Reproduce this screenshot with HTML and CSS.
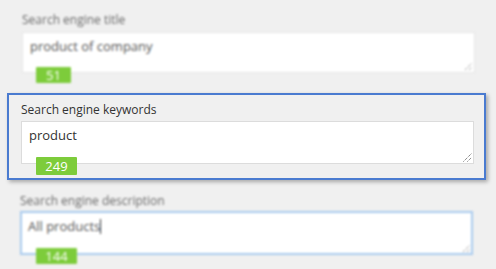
FILE: index.html
```html
<!DOCTYPE html>
<html>
<head>
<meta charset="utf-8">
<link rel="stylesheet" href="styles.css">
</head>
<body>
<div class="page">
  <div class="group blurred top">
    <div class="label">Search engine title</div>
    <div class="field">
      <div class="box">product of company</div>
      <svg class="grip" width="9" height="9" viewBox="0 0 9 9"><path d="M1 8 L8 1 M5 8 L8 5" stroke="#777" stroke-width="1" stroke-dasharray="1 1"/></svg>
      <span class="badge narrow">51</span>
    </div>
  </div>
  <div class="group highlight">
    <div class="label">Search engine keywords</div>
    <div class="field">
      <div class="box">product</div>
      <svg class="grip" width="9" height="9" viewBox="0 0 9 9"><path d="M0.5 8.5 L8.5 0.5 M4.5 8.5 L8.5 4.5" stroke="#555" stroke-width="1" stroke-dasharray="1 1"/></svg>
      <span class="badge">249</span>
    </div>
  </div>
  <div class="group blurred bottom">
    <div class="label">Search engine description</div>
    <div class="field">
      <div class="box focus">All products<span class="caret"></span></div>
      <svg class="grip" width="9" height="9" viewBox="0 0 9 9"><path d="M1 8 L8 1 M5 8 L8 5" stroke="#777" stroke-width="1" stroke-dasharray="1 1"/></svg>
      <span class="badge">144</span>
    </div>
  </div>
</div>
</body>
</html>
```
FILE: styles.css
```css
html, body {
  margin: 0;
  padding: 0;
}
body {
  background: #f0f0f0;
  font-family: "Open Sans", "Noto Sans", sans-serif;
  width: 496px;
  height: 269px;
  overflow: hidden;
}
.page {
  display: flex;
  flex-direction: column;
}
.group {
  display: flex;
  flex-direction: column;
}
.blurred {
  filter: blur(0.8px);
}
.blurred .label {
  color: #6a6a6a;
}
.blurred .box {
  color: #555;
}
.top {
  padding: 11px 0 0 22px;
}
.highlight {
  margin: 20px 0 0 7px;
  border: 2px solid #4a7bd0;
  box-shadow: 2px 2px 4px rgba(0, 0, 0, 0.3);
  padding: 5px 0 0 12px;
  box-sizing: border-box;
  height: 87px;
  width: 479px;
}
.bottom {
  padding: 12px 0 0 20px;
}
.label {
  font-size: 12px;
  line-height: 18px;
  color: #333;
  height: 21px;
}
.bottom .label {
  height: 19px;
}
.highlight .label {
  line-height: 20px;
  height: 21px;
}
.field {
  position: relative;
  width: 453px;
}
.box {
  background: #fff;
  border: 1px solid #dcdcdc;
  height: 43px;
  box-sizing: border-box;
  padding: 4px 7px;
  font-size: 13px;
  line-height: 18px;
  color: #333;
}
.top .box {
  height: 41px;
  border-color: #e6e6e6;
}
.box.focus {
  border: 2px solid #a9cbee;
  height: 44px;
  padding: 4px 6px;
}
.caret {
  display: inline-block;
  width: 1px;
  height: 15px;
  background: #333;
  vertical-align: -3px;
}
.grip {
  position: absolute;
  right: 2px;
  bottom: 2px;
}
.badge {
  position: absolute;
  left: 15px;
  top: 36px;
  width: 41px;
  height: 18px;
  background: #7dcc3b;
  color: #fff;
  font-size: 13px;
  line-height: 18px;
  text-align: center;
  border-radius: 1px;
}
.badge.narrow {
  left: 14px;
  top: 35px;
  width: 35px;
  height: 16px;
  line-height: 16px;
}
.bottom .badge {
  left: 16px;
  top: 37px;
  height: 16px;
  line-height: 16px;
}
```
